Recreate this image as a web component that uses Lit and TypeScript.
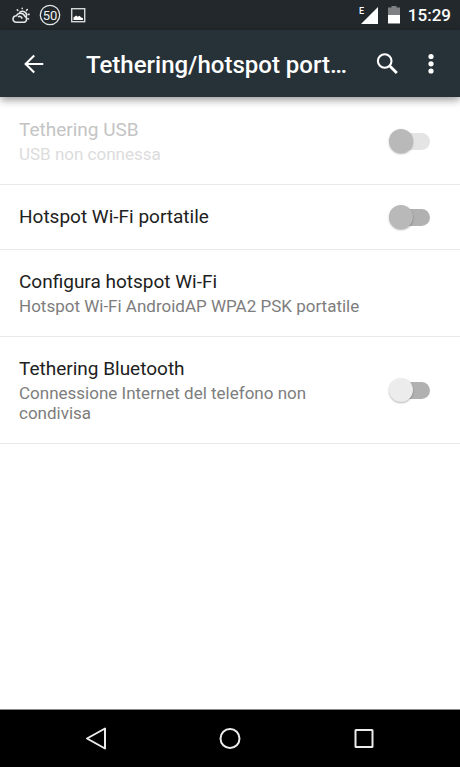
import { LitElement, html, css, svg, nothing } from "lit";
import { customElement, property } from "lit/decorators.js";

@customElement("status-bar")
class StatusBar extends LitElement {
  static styles = css`
    :host {
      display: flex;
      align-items: center;
      height: 30px;
      padding: 0 9px 0 11px;
      background: #22282b;
      color: #fff;
    }
    svg { display: block; flex: none; }
    .notices { display: flex; align-items: center; gap: 8px; flex: 1; }
    .system { display: flex; align-items: center; }
    .battery { margin: 0 8px 0 10px; }
    .badge { font: 400 13px Roboto, sans-serif; }
    .network { font: 500 9px Roboto, sans-serif; }
    time { font: 500 17px/20px Roboto, sans-serif; }
  `;

  render() {
    return html`
      <div class="notices">
        <svg width="20" height="22" viewBox="0 0 20 22" fill="none" stroke="#e4e6e7" stroke-width="1.6" stroke-linecap="round">
          <path d="M5.2 18.3h7.2a3.2 3.2 0 0 0 1.4-6.1 4.6 4.6 0 0 0-8.4-.5 3.3 3.3 0 0 0-.2 6.6z" />
          <path d="M7.5 12.6c1.500-.7 3 .2 3.400 1.500M8.800 8.400a4 4 0 0 1 6.600 4" />
          <path d="M11.2 4.6V4.2M6.8 6.4l-.5-.6M15.6 6.3l.7-.8M17.2 10.4h.9M17 14.6l.5.3" />
        </svg>
        <svg width="22" height="22" viewBox="0 0 22 22">
          <circle cx="11" cy="11" r="9.7" fill="none" stroke="#e4e6e7" stroke-width="1.3" />
          <text class="badge" x="11" y="15.5" text-anchor="middle" fill="#f1f2f2">50</text>
        </svg>
        <svg width="18" height="22" viewBox="0 0 18 22">
          <rect x="2.7" y="4.7" width="13" height="13" fill="none" stroke="#d4d6d7" stroke-width="1.4" />
          <path d="M4.5 16v-2.4l2.6-2.2 1.6 1.4 1.8-1 1.6 1.7 1.8.5v2z" fill="#fff" />
        </svg>
      </div>
      <div class="system">
        <svg width="20" height="20" viewBox="0 0 20 20">
          <text class="network" x="1" y="9" fill="#fff">E</text>
          <path d="M20 2v17H3z" fill="#fff" />
        </svg>
        <svg class="battery" width="12" height="20" viewBox="0 0 12 20">
          <path d="M3.5 1h5v1.5H12V10H0V2.5h3.5z" fill="#7e8183" />
          <path d="M0 10h12v8.5H0z" fill="#fff" />
        </svg>
        <time datetime="15:29">15:29</time>
      </div>
    `;
  }
}

@customElement("app-bar")
class AppBar extends LitElement {
  static styles = css`
    :host {
      display: flex;
      align-items: center;
      height: 67px;
      padding: 0 9px 0 14px;
      background: #273238;
      color: #fff;
      box-shadow: 0 3px 8px rgba(0, 0, 0, 0.4);
      z-index: 1;
    }
    button {
      display: grid;
      place-items: center;
      width: 40px;
      height: 48px;
      padding: 0;
      border: 0;
      background: none;
      color: inherit;
    }
    .more { margin-left: 4px; }
    svg { display: block; }
    h1 {
      flex: 1;
      margin: 0 0 0 32px;
      padding-top: 2px;
      font: 500 24px/32px Roboto, sans-serif;
      white-space: nowrap;
    }
  `;

  render() {
    return html`
      <button aria-label="Indietro">
        <svg width="22" height="22" viewBox="0 0 22 22" fill="none" stroke="currentColor" stroke-width="2.1">
          <path d="M20.3 11H3M11.2 2.4L2.6 11l8.600 8.600" />
        </svg>
      </button>
      <h1>Tethering/hotspot port…</h1>
      <button aria-label="Cerca">
        <svg width="24" height="24" viewBox="0 0 24 24" fill="none" stroke="currentColor">
          <circle cx="9.7" cy="9" r="6.8" stroke-width="2.1" />
          <path d="M14.3 13.6l7.500 7.500" stroke-width="2.800" />
        </svg>
      </button>
      <button class="more" aria-label="Altre opzioni">
        <svg width="8" height="22" viewBox="0 0 8 22" fill="currentColor">
          <circle cx="4" cy="3.5" r="2.6" />
          <circle cx="4" cy="10.8" r="2.6" />
          <circle cx="4" cy="18" r="2.6" />
        </svg>
      </button>
    `;
  }
}

interface Setting {
  id: string;
  title: string;
  summary?: string;
  toggle?: "on-hold" | "off";
  disabled?: boolean;
}

const SETTINGS: Setting[] = [
  { id: "usb", title: "Tethering USB", summary: "USB non connessa", toggle: "on-hold", disabled: true },
  { id: "wifi", title: "Hotspot Wi-Fi portatile", toggle: "on-hold" },
  { id: "config", title: "Configura hotspot Wi-Fi", summary: "Hotspot Wi-Fi AndroidAP WPA2 PSK portatile" },
  { id: "bluetooth", title: "Tethering Bluetooth", summary: "Connessione Internet del telefono non condivisa", toggle: "off" },
];

@customElement("setting-row")
class SettingRow extends LitElement {
  @property({ attribute: false }) setting!: Setting;

  static styles = css`
    :host {
      display: block;
      border-bottom: 1px solid #e9e9e9;
      font-family: Roboto, sans-serif;
    }
    .row {
      display: flex;
      align-items: center;
      gap: 48px;
      width: 100%;
      box-sizing: border-box;
      padding: 20px 30px 20px 19px;
      border: 0;
      background: none;
      font-family: inherit;
      text-align: left;
    }
    .text { display: grid; gap: 2px; flex: 1; }
    .title { font-size: 19px; line-height: 24px; color: #212121; }
    .summary { font-size: 17px; line-height: 20px; color: #7d7d7d; }
    .disabled .title { color: #c4c4c4; }
    .disabled .summary { color: #dcdcdc; }
    input {
      appearance: none;
      display: flex;
      align-items: center;
      flex: none;
      width: 38px;
      height: 17px;
      margin: 0;
      border-radius: 9px;
      background: #b1b1b1;
    }
    .disabled input { background: #e4e4e4; }
    input::before {
      content: "";
      flex: none;
      width: 24px;
      height: 24px;
      margin-left: -3px;
      border-radius: 50%;
      background: #ececec;
      box-shadow: 0 1px 2px rgba(0, 0, 0, 0.3);
    }
    input.on-hold::before { background: #b9b9b9; }
  `;

  render() {
    const s = this.setting;
    const text = html`
      <span class="text">
        <span class="title">${s.title}</span>
        ${s.summary ? html`<span class="summary">${s.summary}</span>` : nothing}
      </span>
    `;
    return s.toggle
      ? html`<label class="row ${s.disabled ? "disabled" : ""}" for=${s.id}>
          ${text}
          <input id=${s.id} class=${s.toggle} type="checkbox" role="switch" ?disabled=${s.toggle === "on-hold"} />
        </label>`
      : html`<button class="row">${text}</button>`;
  }
}

@customElement("navigation-bar")
class NavigationBar extends LitElement {
  static styles = css`
    :host {
      display: flex;
      justify-content: center;
      height: 57px;
      border-top: 1px solid #8a8a8a;
      background: #000;
    }
    button {
      display: grid;
      place-items: center;
      width: 29.2%;
      padding: 0;
      border: 0;
      background: none;
    }
    svg { display: block; }
  `;

  render() {
    const item = (label: string, shape: unknown) => html`
      <button aria-label=${label}>
        <svg width="24" height="24" viewBox="0 0 24 24" fill="none" stroke="#ececec" stroke-width="2" stroke-linejoin="round">
          ${shape}
        </svg>
      </button>
    `;
    return html`
      ${item("Indietro", svg`<path d="M3 11.500L21 1.500v20z" />`)}
      ${item("Home", svg`<circle cx="12" cy="11.5" r="9.5" />`)}
      ${item("Recenti", svg`<rect x="3.5" y="3" width="17" height="17" rx="0.5" />`)}
    `;
  }
}

@customElement("app-root")
class AppRoot extends LitElement {
  static styles = css`
    :host {
      display: flex;
      flex-direction: column;
      min-height: 100vh;
      background: #fff;
    }
    main { flex: 1; padding-top: 1px; }
  `;

  render() {
    return html`
      <status-bar></status-bar>
      <app-bar></app-bar>
      <main>${SETTINGS.map((s) => html`<setting-row .setting=${s}></setting-row>`)}</main>
      <navigation-bar></navigation-bar>
    `;
  }
}
